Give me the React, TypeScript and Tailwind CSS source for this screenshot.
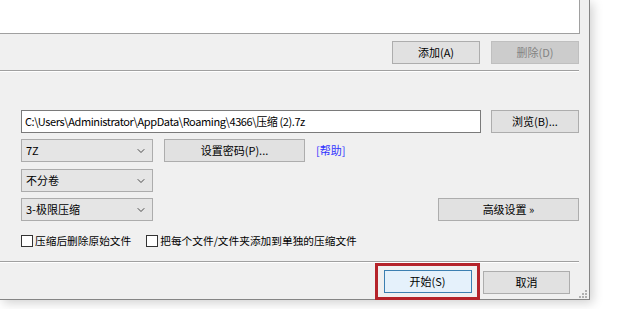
import { ChevronDown } from "lucide-react";

const font = { fontFamily: '"Microsoft YaHei", "Noto Sans CJK SC", "Noto Sans", sans-serif' };

function Btn({
  label,
  w,
  disabled = false,
  primary = false,
}: {
  label: string;
  w: string;
  disabled?: boolean;
  primary?: boolean;
}) {
  let cls = "border-[#adadad] bg-[#e1e1e1] text-black";
  if (disabled) cls = "border-[#bfbfbf] bg-[#cccccc] text-[#838383]";
  if (primary) cls = "border-[#3c7fb1] bg-[#e5f1fb] text-black";
  return (
    <div
      className={`flex h-[23px] shrink-0 items-center justify-center border text-[11px] leading-none ${w} ${cls}`}
    >
      {label}
    </div>
  );
}

function Select({ value }: { value: string }) {
  return (
    <div className="flex h-[23px] w-[132px] shrink-0 items-center justify-between border border-[#acacac] bg-[#e5e5e5] pl-[4px] pr-[5px] text-[11px] text-black">
      <span>{value}</span>
      <ChevronDown size={12} strokeWidth={1.6} className="text-[#222]" />
    </div>
  );
}

function Check({ label }: { label: string }) {
  return (
    <div className="flex items-center gap-[2px] text-[10.7px] text-black">
      <div className="h-[12px] w-[12px] border border-[#333] bg-white" />
      <span>{label}</span>
    </div>
  );
}

function Separator() {
  return (
    <div className="w-[579px]">
      <div className="h-px bg-[#a0a0a0]" />
      <div className="h-px bg-white" />
    </div>
  );
}

export default function App() {
  return (
    <div className="h-[309px] w-[620px] overflow-hidden bg-white" style={font}>
      <div className="flex h-[300px] w-[590px] flex-col border-b border-r border-[#858585] bg-[#f0f0f0] shadow-[3px_3px_10px_rgba(0,0,0,0.18)]">
        {/* file list */}
        <div className="h-[34px] w-[580px] shrink-0 border-b border-r border-[#a0a0a0] bg-white" />

        <div className="mt-[7px] flex w-[579px] justify-end gap-[11px]">
          <Btn label="添加(A)" w="w-[88px]" />
          <Btn label="删除(D)" w="w-[88px]" disabled />
        </div>

        <div className="mt-[6px]">
          <Separator />
        </div>

        <div className="ml-[21px] mt-[38px] flex w-[558px] flex-col">
          <div className="flex items-center gap-[10px]">
            <div className="flex h-[23px] w-[460px] items-center border border-[#7a7a7a] bg-white pl-[3px] text-[11px] tracking-[-0.4px] text-black">
              C:\Users\Administrator\AppData\Roaming\4366\压缩 (2).7z
            </div>
            <Btn label="浏览(B)..." w="w-[88px]" />
          </div>

          <div className="mt-[6px] flex items-center">
            <Select value="7Z" />
            <div className="ml-[11px]">
              <Btn label="设置密码(P)..." w="w-[141px]" />
            </div>
            <span className="ml-[11px] text-[11px] text-[#3333ff]">[帮助]</span>
          </div>

          <div className="mt-[7px] flex">
            <Select value="不分卷" />
          </div>

          <div className="mt-[6px] flex items-center justify-between">
            <Select value="3-极限压缩" />
            <Btn label="高级设置 »" w="w-[141px]" />
          </div>

          <div className="mt-[12px] flex items-center gap-[15px]">
            <Check label="压缩后删除原始文件" />
            <Check label="把每个文件/文件夹添加到单独的压缩文件" />
          </div>
        </div>

        <div className="mt-[12px]">
          <Separator />
        </div>

        <div className="relative flex flex-1">
          <div className="ml-[375px] flex h-[37px] w-[105px] items-center justify-center border-[3px] border-[#b5232a]">
            <Btn label="开始(S)" w="w-[88px]" primary />
          </div>
          <div className="ml-[3px] mt-[8px]">
            <Btn label="取消" w="w-[87px]" />
          </div>
          <div className="absolute bottom-[2px] right-[2px] grid grid-cols-3 gap-px">
            {[0, 0, 1, 0, 1, 1, 1, 1, 1].map((v, i) => (
              <div key={i} className={`h-[2px] w-[2px] ${v ? "bg-[#b0b0b0]" : "bg-transparent"}`} />
            ))}
          </div>
        </div>
      </div>
    </div>
  );
}
